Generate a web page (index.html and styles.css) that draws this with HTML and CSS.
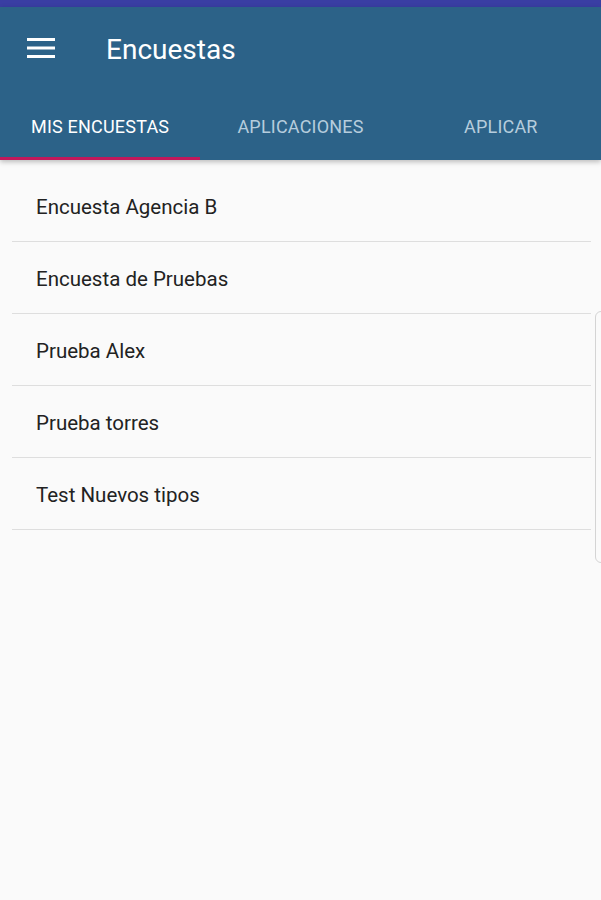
FILE: index.html
```html
<!DOCTYPE html>
<html lang="es">
<head>
    <meta charset="UTF-8">
    <meta name="viewport" content="width=device-width, initial-scale=1.0">
    <title>Encuestas</title>
    <link rel="stylesheet" href="styles.css">
</head>
<body>
    <div class="status-bar"></div>
    <header class="app-bar">
        <div class="toolbar">
            <svg class="menu-icon" width="28" height="20" viewBox="0 0 28 20">
                <rect x="0" y="0" width="28" height="3" fill="#fff"/>
                <rect x="0" y="8.5" width="28" height="3" fill="#fff"/>
                <rect x="0" y="17" width="28" height="3" fill="#fff"/>
            </svg>
            <h1 class="title">Encuestas</h1>
        </div>
        <nav class="tabs">
            <div class="tab active">MIS ENCUESTAS</div>
            <div class="tab">APLICACIONES</div>
            <div class="tab">APLICAR</div>
        </nav>
    </header>
    <ul class="survey-list">
        <li>Encuesta Agencia B</li>
        <li>Encuesta de Pruebas</li>
        <li>Prueba Alex</li>
        <li>Prueba torres</li>
        <li>Test Nuevos tipos</li>
    </ul>
    <div class="edge-handle"></div>
</body>
</html>
```
FILE: styles.css
```css
body {
    font-family: 'Roboto', 'Noto Sans', sans-serif;
    background-color: #fafafa;
    margin: 0;
    padding: 0;
    height: 900px;
    overflow: hidden;
}

.status-bar {
    height: 7px;
    background-color: #3a3ea3;
}

.app-bar {
    background-color: #2c6288;
    box-shadow: 0 2px 5px rgba(0, 0, 0, 0.25);
    position: relative;
}

.toolbar {
    height: 86px;
    display: flex;
    align-items: center;
    padding-left: 27px;
}

.menu-icon {
    margin-top: -4px;
}

.title {
    margin: -2px 0 0 51px;
    color: #fff;
    font-size: 28px;
    font-weight: 400;
}

.tabs {
    display: flex;
    height: 67px;
}

.tab {
    flex: 1;
    display: flex;
    align-items: center;
    justify-content: center;
    color: #b6cddd;
    font-size: 18px;
    letter-spacing: 0.2px;
    padding-top: 2px;
    border-bottom: 3px solid transparent;
}

.tab.active {
    color: #fff;
    border-bottom-color: #c2185b;
}

.survey-list {
    list-style-type: none;
    margin: 10px 10px 0 12px;
    padding: 0;
}

.survey-list li {
    height: 67px;
    line-height: 67px;
    padding-top: 4px;
    border-bottom: 1px solid #dedede;
    padding-left: 24px;
    font-size: 20.5px;
    color: #222;
}

.edge-handle {
    position: absolute;
    top: 311px;
    right: -8px;
    width: 12px;
    height: 250px;
    border: 1px solid #d4d4d4;
    border-radius: 6px;
}
```
